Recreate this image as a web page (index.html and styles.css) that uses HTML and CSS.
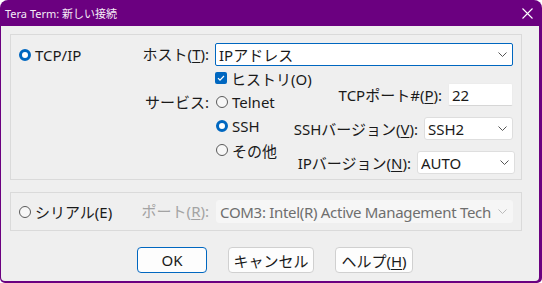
FILE: index.html
```html
<!DOCTYPE html>
<html lang="ja">
<head>
    <meta charset="UTF-8">
    <title>Tera Term: 新しい接続</title>
    <link rel="stylesheet" href="styles.css">
</head>
<body>

    <div class="window">
        <div class="titlebar">
            <span class="title">Tera Term: 新しい接続</span>
            <svg class="close" width="11" height="11" viewBox="0 0 11 11">
                <path d="M0.5 0.5L10.5 10.5M10.5 0.5L0.5 10.5" stroke="#fff" stroke-width="1.1" fill="none"/>
            </svg>
        </div>

        <div class="client">
            <!-- TCP/IP -->
            <div class="group tcp">
                <div class="radio on proto"><span class="dot"></span>TCP/IP</div>
                <span class="label">ホスト(<u>T</u>):</span>
                <div class="combo focus">
                    <span class="val">IPアドレス</span>
                    <svg class="chev" width="9" height="5" viewBox="0 0 9 5"><path d="M0.5 0.5L4.5 4.5L8.5 0.5" stroke="#555" fill="none"/></svg>
                </div>

                <span class="label service">サービス:</span>
                <div class="lower">
                    <div class="opts">
                        <div class="check"><span class="box"><svg width="12" height="12" viewBox="0 0 12 12"><path d="M3 6.2L5 8.2L9 4" stroke="#fff" stroke-width="1.2" fill="none"/></svg></span>ヒストリ(O)</div>
                        <div class="radio"><span class="dot"></span>Telnet</div>
                        <div class="radio on"><span class="dot"></span>SSH</div>
                        <div class="radio"><span class="dot"></span>その他</div>
                    </div>
                    <div class="settings">
                        <div class="row">
                            <span>TCPポート#(<u>P</u>):</span>
                            <div class="input port">22</div>
                        </div>
                        <div class="row">
                            <span>SSHバージョン(<u>V</u>):</span>
                            <div class="combo ssh">
                                <span class="val">SSH2</span>
                                <svg class="chev" width="9" height="5" viewBox="0 0 9 5"><path d="M0.5 0.5L4.5 4.5L8.5 0.5" stroke="#555" fill="none"/></svg>
                            </div>
                        </div>
                        <div class="row">
                            <span>IPバージョン(<u>N</u>):</span>
                            <div class="combo ipver">
                                <span class="val">AUTO</span>
                                <svg class="chev" width="9" height="5" viewBox="0 0 9 5"><path d="M0.5 0.5L4.5 4.5L8.5 0.5" stroke="#555" fill="none"/></svg>
                            </div>
                        </div>
                    </div>
                </div>
            </div>

            <!-- シリアル -->
            <div class="group serial">
                <div class="radio proto"><span class="dot"></span>シリアル(E)</div>
                <span class="label disabled">ポート(<u>R</u>):</span>
                <div class="combo off">
                    <span class="val">COM3: Intel(R) Active Management Tech</span>
                    <svg class="chev" width="9" height="5" viewBox="0 0 9 5"><path d="M0.5 0.5L4.5 4.5L8.5 0.5" stroke="#bbb" fill="none"/></svg>
                </div>
            </div>

            <div class="buttons">
                <button class="default ok">OK</button>
                <button class="cancel">キャンセル</button>
                <button class="help">ヘルプ(<u>H</u>)</button>
            </div>
        </div>
    </div>

</body>
</html>
```

FILE: styles.css
```css
/* ダイアログ全体 */
body {
    margin: 0;
    background: #fff;
    font-family: 'Noto Sans', 'Noto Sans CJK JP', sans-serif;
    font-size: 15px;
    color: #1a1a1a;
}

.window {
    width: 542px;
    height: 283px;
    background: #6b0080;
    border-radius: 8px 8px 5px 5px;
    overflow: hidden;
    display: flex;
    flex-direction: column;
}

.titlebar {
    height: 26px;
    display: flex;
    align-items: center;
    justify-content: space-between;
    padding: 0 9px 0 5px;
    color: #f4ecf6;
    font-size: 11px;
}

.close { margin-top: 1px; }

.client {
    flex: 1;
    margin: 0 3px 2px 1px;
    background: #efefef;
    border-radius: 0 0 4px 4px;
}

/* グループ枠 */
.group {
    box-sizing: border-box;
    margin-left: 9px;
    width: 512px;
    border: 1px solid #dadada;
    display: grid;
    grid-template-columns: 114px 70px minmax(0, 1fr);
    column-gap: 6px;
    padding: 0 8px;
}

.tcp {
    margin-top: 8px;
    height: 146px;
    padding-top: 8px;
    grid-template-rows: 23px auto;
}

.serial {
    margin-top: 12px;
    height: 39px;
    padding-top: 7px;
    grid-template-rows: 23px;
}

.label {
    text-align: right;
    line-height: 23px;
    white-space: nowrap;
}

.label.service {
    grid-column: 2;
    padding-top: 24px;
    line-height: 24px;
}

.disabled { color: #a3a3a3; }

u { text-decoration-thickness: 1px; text-underline-offset: 2px; }

/* ラジオ・チェック */
.radio, .check {
    display: flex;
    align-items: center;
    gap: 4px;
    height: 24px;
    white-space: nowrap;
}

.proto { height: 23px; }

.dot {
    box-sizing: border-box;
    flex: none;
    width: 12px;
    height: 12px;
    border-radius: 50%;
    border: 1px solid #5a5a5a;
    background: #f7f7f7;
}

.radio.on .dot {
    border: 3.5px solid #0067c0;
    background: #fff;
}

.box {
    flex: none;
    width: 12px;
    height: 12px;
    border-radius: 2px;
    background: #0067c0;
    display: flex;
}

.lower {
    grid-column: 3;
    display: flex;
}

.opts { flex: none; }
.opts .radio { margin-left: 1px; }

.settings {
    flex: 1;
    min-width: 0;
    display: flex;
    flex-direction: column;
    align-items: flex-end;
    padding-top: 17px;
    gap: 11px;
}

.row {
    display: flex;
    align-items: center;
    justify-content: flex-end;
    gap: 6px;
    height: 23px;
    white-space: nowrap;
}

/* 入力部品 */
.combo, .input {
    box-sizing: border-box;
    flex: none;
    height: 23px;
    display: flex;
    align-items: center;
    justify-content: space-between;
    gap: 4px;
    padding: 0 5px 0 3px;
    background: #fff;
    border: 1px solid #dedede;
    border-radius: 3px;
    white-space: nowrap;
    overflow: hidden;
}

.val { overflow: hidden; min-width: 0; }
.chev { flex: none; }

.combo.focus { border-color: #0067c0; border-radius: 2px; }

.port { width: 65px; border-color: #ececec; border-bottom-color: #d6d6d6; border-radius: 2px; }
.ssh { width: 89px; }
.ipver { width: 98px; margin-right: -2px; }

.combo.off {
    margin-left: 1px;
    background: #f6f6f6;
    border-color: #f6f6f6;
    color: #6e6e6e;
    letter-spacing: -0.3px;
}

/* ボタン */
.buttons {
    display: flex;
    gap: 21px;
    margin-top: 16px;
    padding-left: 136px;
}

button {
    box-sizing: border-box;
    height: 26px;
    font: inherit;
    color: #1a1a1a;
    background: #fdfdfd;
    border: 1px solid #d0d0d0;
    border-radius: 4px;
    padding: 0;
}

button.default { border-color: #0067c0; }
.ok { width: 70px; }
.cancel { width: 86px; }
.help { width: 78px; }
```
